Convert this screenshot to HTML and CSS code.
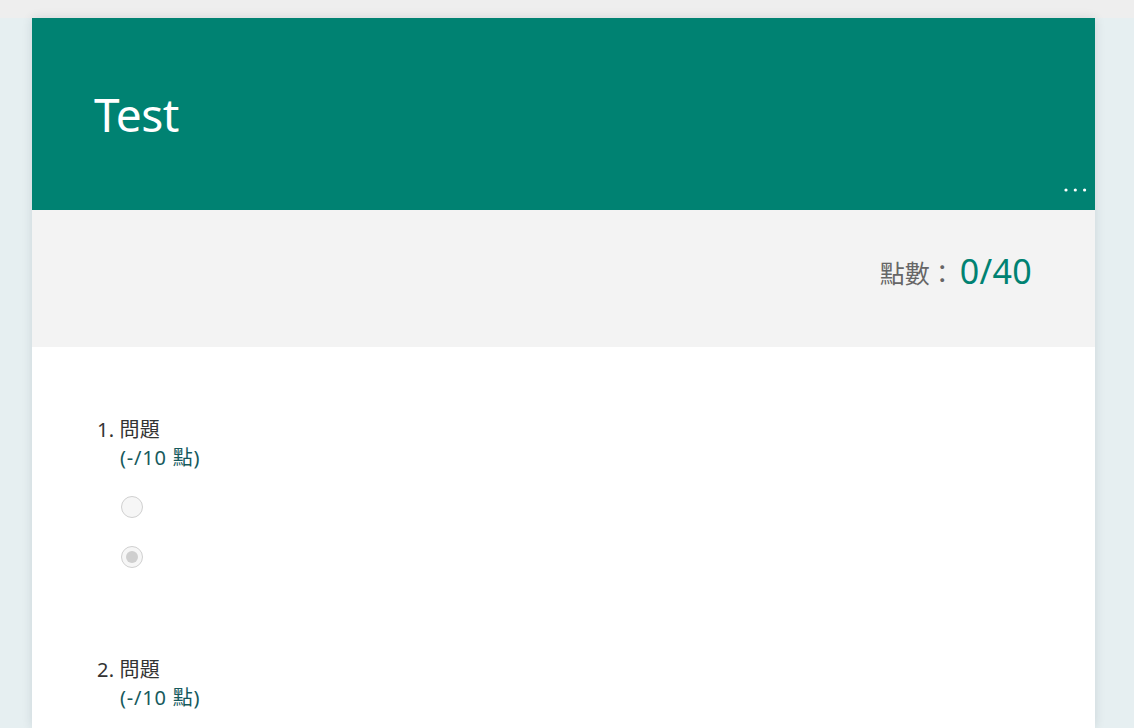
FILE: index.html
```html
<!DOCTYPE html>
<html lang="zh-Hant">
<head>
<meta charset="utf-8">
<title>Test</title>
<link rel="stylesheet" href="styles.css">
</head>
<body>
<div class="topbar"></div>
<main class="card">
  <header class="header">
    <h1 class="title">Test</h1>
    <button class="more" aria-label="更多">
      <svg width="23" height="4" viewBox="0 0 23 4"><circle cx="2" cy="2" r="1.6" fill="#fff"/><circle cx="11.3" cy="2" r="1.6" fill="#fff"/><circle cx="20.6" cy="2" r="1.6" fill="#fff"/></svg>
    </button>
  </header>
  <section class="score">
    <span class="score-label">點數：</span>
    <span class="score-value">0/40</span>
  </section>
  <section class="questions">
    <div class="question">
      <div class="q-title">1. 問題</div>
      <div class="q-points">(-/10 點)</div>
      <div class="options">
        <span class="radio"></span>
        <span class="radio checked"></span>
      </div>
    </div>
    <div class="question">
      <div class="q-title">2. 問題</div>
      <div class="q-points">(-/10 點)</div>
    </div>
  </section>
</main>
</body>
</html>
```
FILE: styles.css
```css
html, body {
  margin: 0;
  padding: 0;
}
body {
  background: #e6eff1;
  font-family: "Noto Sans", "Noto Sans CJK TC", sans-serif;
  overflow: hidden;
  height: 728px;
}
.topbar {
  height: 18px;
  background: #eeeeee;
}
.card {
  margin-left: 32px;
  width: 1063px;
  background: #ffffff;
  box-shadow: 0 0 10px rgba(0, 40, 60, 0.12);
  min-height: 710px;
}
.header {
  position: relative;
  height: 192px;
  background: #008272;
  padding-left: 62px;
  box-sizing: border-box;
  padding-top: 66px;
}
.title {
  margin: 0;
  font-weight: 400;
  font-size: 46px;
  line-height: 60px;
  color: #ffffff;
  letter-spacing: -0.5px;
}
.more {
  position: absolute;
  right: 8px;
  bottom: 18px;
  background: none;
  border: 0;
  padding: 0;
  display: flex;
}
.score {
  height: 137px;
  box-sizing: border-box;
  background: #f3f3f3;
  display: flex;
  justify-content: flex-end;
  align-items: center;
  padding-right: 63px;
  padding-bottom: 16px;
  gap: 5px;
}
.score-label {
  font-size: 25px;
  color: #666666;
  margin-top: 3px;
}
.score-value {
  font-size: 34px;
  color: #008272;
  letter-spacing: 0.3px;
}
.questions {
  padding: 69px 0 0 65px;
}
.question {
  margin-bottom: 88px;
}
.q-title {
  font-size: 20px;
  line-height: 28px;
  color: #333333;
  letter-spacing: 0.2px;
}
.q-points {
  font-size: 20px;
  line-height: 28px;
  color: #165a5d;
  padding-left: 23px;
  letter-spacing: 0.8px;
}
.options {
  display: flex;
  flex-direction: column;
  gap: 28px;
  padding: 24px 0 0 24px;
}
.radio {
  width: 20px;
  height: 20px;
  border-radius: 50%;
  border: 1px solid #d0d0d0;
  background: #f6f6f6;
  display: flex;
  align-items: center;
  justify-content: center;
}
.radio.checked::after {
  content: "";
  width: 12px;
  height: 12px;
  border-radius: 50%;
  background: #cfcfcf;
}
```
